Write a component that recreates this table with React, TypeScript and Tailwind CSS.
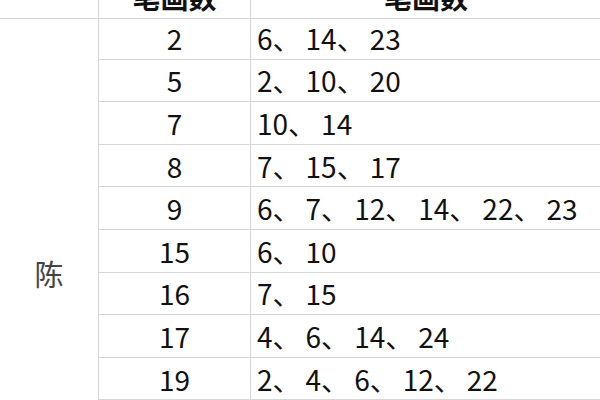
import React from "react";

const rows = [
  { n: "2", v: "6、14、23" },
  { n: "5", v: "2、10、20" },
  { n: "7", v: "10、14" },
  { n: "8", v: "7、15、17" },
  { n: "9", v: "6、7、12、14、22、23" },
  { n: "15", v: "6、10" },
  { n: "16", v: "7、15" },
  { n: "17", v: "4、6、14、24" },
  { n: "19", v: "2、4、6、12、22" },
  { n: "21", v: "2、4、12" },
];

const Values = ({ text }: { text: string }) => {
  const parts = text.split("、");
  return (
    <>
      {parts.map((p, i) => (
        <span key={i}>
          {p}
          {i < parts.length - 1 && <span className="mr-[5px]">、</span>}
        </span>
      ))}
    </>
  );
};

const App = () => {
  return (
    <div
      className="w-[600px] h-[400px] overflow-hidden bg-white text-[#111]"
      style={{ fontFamily: '"Noto Sans CJK SC", "Noto Sans", sans-serif' }}
    >
      <div className="flex w-[700px] h-[43px] mt-[-24px] border-b border-[#d6d6d6]">
        <div className="w-[99px] shrink-0 border-r border-[#d6d6d6]" />
        <div className="w-[152px] shrink-0 border-r border-[#d6d6d6] flex items-center justify-center text-[28px] font-bold">
          笔画数
        </div>
        <div className="w-[350px] shrink-0 flex items-center justify-center text-[28px] font-bold">
          笔画数
        </div>
      </div>
      <div className="flex w-[700px] mt-[-2px]">
        <div className="w-[99px] shrink-0 border-r border-[#d6d6d6] flex justify-center pt-[236px]">
          <span className="text-[29px] leading-[40px] text-[#444]">陈</span>
        </div>
        <div className="flex-1 flex flex-col">
          {rows.map((r) => (
            <div key={r.n} className="flex h-[42.6px] border-b border-[#d6d6d6] text-[28px] leading-none">
              <div className="w-[152px] shrink-0 border-r border-[#d6d6d6] flex items-center justify-center">
                {r.n}
              </div>
              <div className="flex-1 flex items-center pl-[6px]">
                <Values text={r.v} />
              </div>
            </div>
          ))}
        </div>
      </div>
    </div>
  );
};

export default App;
